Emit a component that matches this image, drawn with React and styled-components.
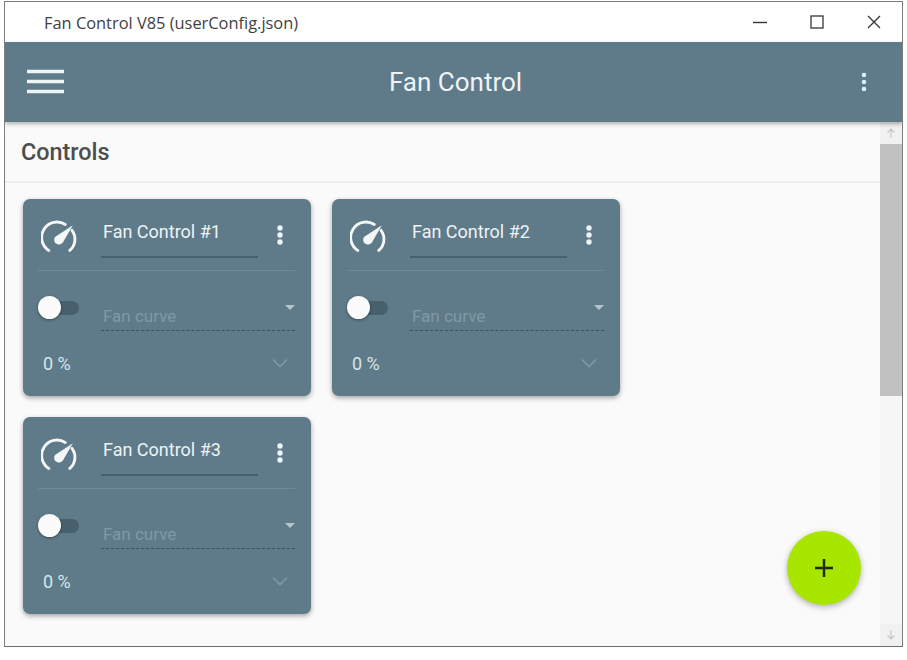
import React from "react";
import styled, { createGlobalStyle } from "styled-components";

const Global = createGlobalStyle`
  html, body { margin: 0; padding: 0; background: #fff; }
  body { font-family: Roboto, "Liberation Sans", sans-serif; }
  * { box-sizing: border-box; }
`;

const Page = styled.div`
  width: 907px;
  height: 660px;
  padding: 1px 4px 13px 4px;
  background: #fff;
  overflow: hidden;
`;

const Win = styled.div`
  position: relative;
  width: 899px;
  height: 646px;
  border: 1px solid #7d7d7d;
  border-bottom-color: #6e6e6e;
  display: flex;
  flex-direction: column;
  background: #fafafa;
  overflow: hidden;
`;

const TitleBar = styled.div`
  height: 40px;
  flex: none;
  display: flex;
  align-items: center;
  padding-left: 39px;
  background: #fff;
`;

const TitleText = styled.div`
  flex: 1;
  font-family: "Open Sans", sans-serif;
  font-size: 16.4px;
  color: #3f3f3f;
`;

const WinBtn = styled.div`
  width: 57px;
  height: 40px;
  display: flex;
  align-items: center;
  justify-content: center;
  color: #333;
`;

const AppBar = styled.header`
  position: relative;
  z-index: 2;
  flex: none;
  height: 80px;
  background: #5f7b89;
  box-shadow: 0 2px 4px rgba(0, 0, 0, 0.3);
  display: flex;
  align-items: center;
  justify-content: space-between;
  padding: 0 35px 0 22px;
`;

const AppTitle = styled.div`
  position: absolute;
  left: 0;
  right: 0;
  text-align: center;
  padding-left: 4px;
  font-size: 26px;
  color: #eef3f5;
  pointer-events: none;
`;

const Body = styled.div`
  flex: 1;
  min-height: 0;
  display: flex;
  overflow: hidden;
`;

const Content = styled.main`
  flex: 1;
  min-width: 0;
  display: flex;
  flex-direction: column;
  overflow: hidden;
`;

const SectionHead = styled.div`
  height: 61px;
  flex: none;
  display: flex;
  align-items: center;
  padding: 0 0 0 16px;
  border-bottom: 2px solid #efefef;
  font-size: 23.4px;
  font-weight: 500;
  color: #4d4d4d;
`;

const Cards = styled.div`
  flex: none;
  display: grid;
  grid-template-columns: repeat(2, 288px);
  gap: 21px;
  padding: 16px 0 10px 18px;
`;

const Card = styled.article`
  height: 197px;
  border-radius: 7px;
  background: #5f7b89;
  box-shadow: 0 2px 5px rgba(0, 0, 0, 0.35);
  padding: 0 16px 0 15px;
  display: flex;
  flex-direction: column;
`;

const CardHead = styled.div`
  height: 72px;
  flex: none;
  display: flex;
  align-items: flex-start;
  border-bottom: 1px solid #6f8997;
`;

const GaugeBox = styled.div`
  width: 63px;
  flex: none;
  padding: 21px 0 0 3px;
  display: flex;
`;

const NameField = styled.div`
  width: 157px;
  height: 59px;
  flex: none;
  padding: 21px 0 0 2px;
  border-bottom: 2px solid #46606e;
  font-size: 18px;
  line-height: 24px;
  white-space: nowrap;
  color: #eef3f5;
`;

const MoreBox = styled.div`
  flex: 1;
  padding: 26px 0 0 19px;
  display: flex;
`;

const ControlRow = styled.div`
  height: 61px;
  flex: none;
  display: flex;
`;

const SwitchBox = styled.div`
  position: relative;
  width: 63px;
  flex: none;
`;

const Track = styled.div`
  position: absolute;
  left: 11px;
  top: 30px;
  width: 30px;
  height: 14px;
  border-radius: 7px;
  background: #46606e;
`;

const Knob = styled.div`
  position: absolute;
  left: 0;
  top: 25px;
  width: 23px;
  height: 23px;
  border-radius: 50%;
  background: #fbfbfb;
  box-shadow: 0 1px 3px rgba(0, 0, 0, 0.4);
`;

const SelectField = styled.div`
  position: relative;
  flex: 1;
  height: 60px;
  padding: 34px 0 0 2px;
  border-bottom: 1px dashed #3a505c;
  font-size: 17px;
  line-height: 22px;
  color: #7f99a6;
`;

const SelectArrow = styled.div`
  position: absolute;
  right: 0;
  top: 34px;
  width: 0;
  height: 0;
  border-left: 5px solid transparent;
  border-right: 5px solid transparent;
  border-top: 5px solid #b4c5ce;
`;

const BottomRow = styled.div`
  flex: 1;
  display: flex;
  align-items: flex-start;
  justify-content: space-between;
  padding: 21px 7px 0 5px;
`;

const Percent = styled.div`
  font-size: 18px;
  line-height: 22px;
  color: #d9e6ec;
`;

const Chevron = styled.div`
  display: flex;
  padding-top: 5px;
`;

const ScrollBar = styled.div`
  width: 22px;
  flex: none;
  display: flex;
  flex-direction: column;
  background: #f6f6f6;
`;

const ScrollBtn = styled.div`
  height: 22px;
  flex: none;
  display: flex;
  align-items: center;
  justify-content: center;
  background: #f1f1f1;
`;

const Thumb = styled.div`
  height: 252px;
  flex: none;
  background: #c1c1c1;
`;

const Spacer = styled.div`
  flex: 1;
`;

const Fab = styled.button`
  position: absolute;
  left: 782px;
  top: 529px;
  width: 74px;
  height: 74px;
  border: 0;
  padding: 0;
  border-radius: 50%;
  background: #a8e600;
  box-shadow: 0 2px 6px rgba(0, 0, 0, 0.3);
  display: flex;
  align-items: center;
  justify-content: center;
`;

const Dots = ({ color = "#eef3f5", r = 2.7 }) => (
  <svg width="6" height="20" viewBox="0 0 6 20">
    <circle cx="3" cy="3" r={r} fill={color} />
    <circle cx="3" cy="10" r={r} fill={color} />
    <circle cx="3" cy="17" r={r} fill={color} />
  </svg>
);

const Gauge = () => (
  <svg width="36" height="34" viewBox="0 0 40 38" fill="none">
    <path d="M8.6 34 A16.5 16.5 0 0 1 27 5" stroke="#f4f7f8" strokeWidth="3.2" strokeLinecap="round" />
    <path d="M34.5 11.5 A16.5 16.5 0 0 1 32 34" stroke="#f4f7f8" strokeWidth="3.2" strokeLinecap="round" />
    <path d="M35.5 6 L24.5 25 A5.4 5.4 0 1 1 15.5 19 Z" fill="#f4f7f8" />
  </svg>
);

const cards = ["Fan Control #1", "Fan Control #2", "Fan Control #3"];

export default function App() {
  return (
    <Page>
      <Global />
      <Win>
        <TitleBar>
          <TitleText>Fan Control V85 (userConfig.json)</TitleText>
          <WinBtn>
            <svg width="14" height="14" viewBox="0 0 14 14">
              <path d="M0 7.5h14" stroke="#333" strokeWidth="1.4" />
            </svg>
          </WinBtn>
          <WinBtn>
            <svg width="14" height="14" viewBox="0 0 14 14" fill="none">
              <rect x="1" y="1" width="12" height="12" stroke="#444" strokeWidth="1.4" />
            </svg>
          </WinBtn>
          <WinBtn>
            <svg width="14" height="14" viewBox="0 0 14 14">
              <path d="M1 1l12 12M13 1L1 13" stroke="#333" strokeWidth="1.3" />
            </svg>
          </WinBtn>
        </TitleBar>
        <AppBar>
          <svg width="38" height="26" viewBox="0 0 38 26">
            <path d="M0 2.5h37M0 12.5h37M0 22.5h37" stroke="#eef3f5" strokeWidth="3.4" />
          </svg>
          <AppTitle>Fan Control</AppTitle>
          <Dots color="#d8eef8" r={2.3} />
        </AppBar>
        <Body>
          <Content>
            <SectionHead>Controls</SectionHead>
            <Cards>
              {cards.map((name) => (
                <Card key={name}>
                  <CardHead>
                    <GaugeBox>
                      <Gauge />
                    </GaugeBox>
                    <NameField>{name}</NameField>
                    <MoreBox>
                      <Dots />
                    </MoreBox>
                  </CardHead>
                  <ControlRow>
                    <SwitchBox>
                      <Track />
                      <Knob />
                    </SwitchBox>
                    <SelectField>
                      Fan curve
                      <SelectArrow />
                    </SelectField>
                  </ControlRow>
                  <BottomRow>
                    <Percent>0 %</Percent>
                    <Chevron>
                      <svg width="16" height="10" viewBox="0 0 16 10" fill="none">
                        <path d="M1 1.5l7 7 7-7" stroke="#7f99a6" strokeWidth="1.6" />
                      </svg>
                    </Chevron>
                  </BottomRow>
                </Card>
              ))}
            </Cards>
          </Content>
          <ScrollBar>
            <ScrollBtn>
              <svg width="10" height="10" viewBox="0 0 10 10" fill="none">
                <path d="M5 9.5V1M1.5 4.5L5 1l3.5 3.5" stroke="#c6c6c6" strokeWidth="1.2" />
              </svg>
            </ScrollBtn>
            <Thumb />
            <Spacer />
            <ScrollBtn>
              <svg width="10" height="10" viewBox="0 0 10 10" fill="none">
                <path d="M5 .5V9M1.5 5.5L5 9l3.5-3.5" stroke="#c6c6c6" strokeWidth="1.2" />
              </svg>
            </ScrollBtn>
          </ScrollBar>
        </Body>
        <Fab aria-label="Add">
          <svg width="20" height="20" viewBox="0 0 20 20">
            <path d="M10 1v18M1 10h18" stroke="#1c2a08" strokeWidth="2.4" />
          </svg>
        </Fab>
      </Win>
    </Page>
  );
}
